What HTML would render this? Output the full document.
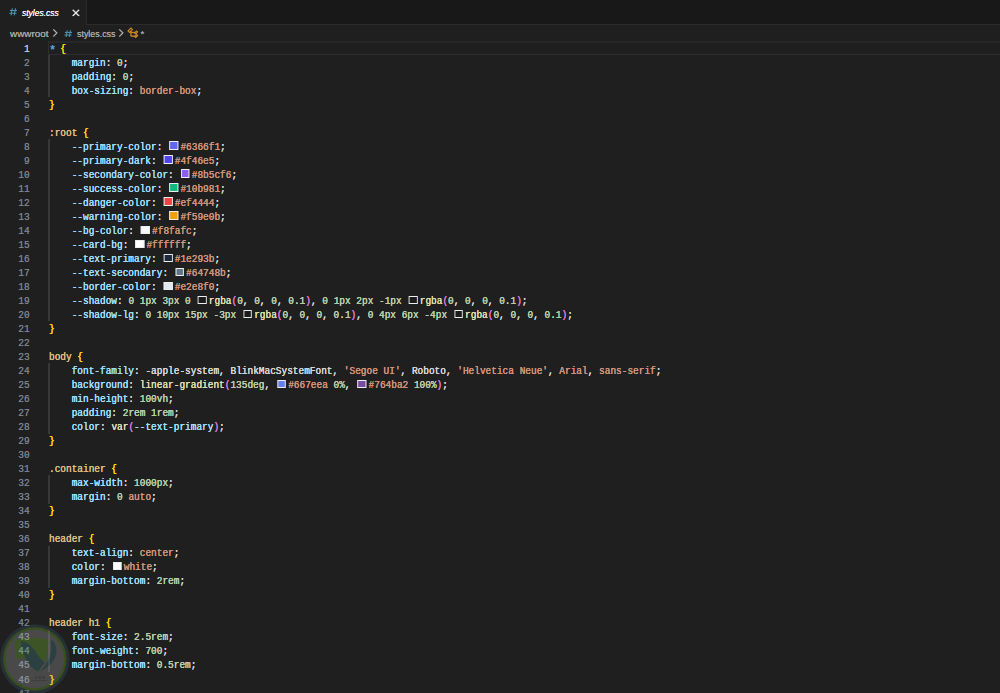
<!DOCTYPE html>
<html lang="en">
<head>
<meta charset="utf-8">
<title>styles.css</title>
<style>
html,body{margin:0;padding:0;}
body{width:1000px;height:693px;overflow:hidden;background:#1f1f1f;position:relative;font-family:"Liberation Sans",sans-serif;}
#tabs{position:absolute;left:0;top:0;width:1000px;height:25px;background:#181818;border-bottom:1px solid #2b2b2b;box-sizing:border-box;}
#tab{position:absolute;left:0;top:0;width:87px;height:25px;background:#1f1f1f;border-right:1px solid #2b2b2b;box-sizing:border-box;}
.hash{position:absolute;}
#tab .name{position:absolute;left:21.8px;top:7.3px;font-size:9.6px;line-height:normal;color:#ffffff;font-style:italic;white-space:nowrap;transform:scaleX(0.885);transform-origin:0 0;text-shadow:0 0 0.5px currentColor;}
#tab .x{position:absolute;left:70.1px;top:6.8px;width:11.8px;height:11.8px;}
#crumbs{position:absolute;left:0;top:25px;width:1000px;height:16px;background:#1f1f1f;font-size:9.6px;color:#a9a9a9;white-space:nowrap;}
#crumbs .bt{position:absolute;top:3.2px;line-height:normal;transform-origin:0 0;text-shadow:0 0 0.5px currentColor;}
#crumbs .ic{position:absolute;top:2.3px;width:11.8px;height:11.8px;}
#editor{position:absolute;left:0;top:41px;width:1000px;height:652px;overflow:hidden;font-family:"Liberation Mono",monospace;font-size:10.3px;line-height:14px;color:#d4d4d4;}
.l{position:relative;height:14.016px;white-space:pre;}
.ln{position:absolute;left:0;top:0.8px;width:29.6px;text-align:right;color:#7b828d;transform:scaleX(0.919);transform-origin:100% 0;text-shadow:0 0 0.6px currentColor;}
.cur .ln{color:#cccccc;}
.cur:after{content:"";position:absolute;left:48px;top:0;right:0;height:15px;background:linear-gradient(to bottom,rgba(48,48,48,.55) 50%,rgba(48,48,48,.45) 50%) 0 0/100% 2px no-repeat,linear-gradient(#2e2e2e,#2e2e2e) 0 13px/100% 1px no-repeat,linear-gradient(#2e2e2e,#2e2e2e) 0 1px/1px 13px no-repeat;}
.c{position:absolute;left:49.2px;top:0.8px;transform:scaleX(0.9174);transform-origin:0 0;text-shadow:0 0 0.6px currentColor,0 0 0.5px currentColor;}
.g{position:absolute;left:48.2px;top:0;width:1.4px;height:14.1px;background:#383838;}
.w{display:inline-block;box-sizing:border-box;width:9.7px;height:8.6px;border:solid #eeeeee;border-width:1px 1.09px;margin:0 2.24px 0 1.54px;vertical-align:-0.1px;}
.k{color:#569cd6}.s{color:#d7ba7d}.p{color:#9cdcfe}.v{color:#ce9178}.n{color:#b5cea8}.f{color:#dcdcaa}.b1{color:#ffd700}.b2{color:#da70d6}.t{color:#d4d4d4}
#wm{position:absolute;left:0;top:623.5px;opacity:0.31;}
.ast{display:inline-block;width:6.18px;text-align:center;font-size:13px;line-height:0;position:relative;top:2.6px;}
</style>
</head>
<body>
<div id="tabs">
  <div id="tab">
    <svg class="hash" style="left:9.2px;top:7.9px" width="8.4" height="7.7" preserveAspectRatio="none" viewBox="0 0 8.4 8"><path d="M3.3 0.3 L2.1 7.7 M6.5 0.3 L5.3 7.7 M0.9 2.6 H8 M0.4 5.4 H7.5" stroke="#519aba" stroke-width="1" fill="none"/></svg>
    <span class="name">styles.css</span>
    <svg class="x" viewBox="0 0 16 16"><path fill="#ffffff" stroke="#ffffff" stroke-width="0.9" d="M8 8.707l3.646 3.647.708-.707L8.707 8l3.647-3.646-.707-.708L8 7.293 4.354 3.646l-.707.708L7.293 8l-3.646 3.646.707.708L8 8.707z"/></svg>
  </div>
</div>
<div id="crumbs">
  <span class="bt" style="left:10px;transform:scaleX(1.03)">wwwroot</span>
  <svg class="ic" style="left:49px" viewBox="0 0 16 16"><path fill="#c4c4c4" stroke="#c4c4c4" stroke-width="0.8" d="M10.072 8.024L5.715 3.667l.618-.62L11 7.716v.618L6.333 13l-.618-.619 4.357-4.357z"/></svg>
  <svg class="hash" style="left:64.1px;top:5px" width="8.4" height="7.4" preserveAspectRatio="none" viewBox="0 0 8.4 8"><path d="M3.3 0.3 L2.1 7.7 M6.5 0.3 L5.3 7.7 M0.9 2.6 H8 M0.4 5.4 H7.5" stroke="#519aba" stroke-width="1" fill="none"/></svg>
  <span class="bt" style="left:76.6px;transform:scaleX(0.925)">styles.css</span>
  <svg class="ic" style="left:115.1px" viewBox="0 0 16 16"><path fill="#c4c4c4" stroke="#c4c4c4" stroke-width="0.8" d="M10.072 8.024L5.715 3.667l.618-.62L11 7.716v.618L6.333 13l-.618-.619 4.357-4.357z"/></svg>
  <svg class="ic" style="left:126.9px" viewBox="0 0 16 16"><path fill="#ee9d28" stroke="#ee9d28" stroke-width="0.45" d="M11.34 9.71h.71l2.67-2.67v-.71L13.38 5h-.7l-1.82 1.81h-5V5.56l1.86-1.85V3l-2-2H5L1 5v.71l2 2h.71l1.14-1.15v5.79l.5.5H10v.52l1.33 1.34h.71l2.67-2.67v-.71L13.37 10h-.7l-1.86 1.85h-5v-4H10v.48l1.34 1.38zm1.69-3.65l.63.63-2 2-.63-.63 2-2zm0 5l.63.63-2 2-.63-.63 2-2zM3.35 6.65l-1.29-1.3 3.29-3.29 1.3 1.29-3.3 3.3z"/></svg>
  <span class="bt" style="left:140.6px">*</span>
</div>
<div id="editor">
<div class="l cur"><span class="ln">1</span><span class="c"><span class="k ast">*</span> <span class="b1">{</span></span></div>
<div class="l"><span class="ln">2</span><i class="g"></i><span class="c">    <span class="p">margin</span><span class="t">:</span> <span class="n">0</span><span class="t">;</span></span></div>
<div class="l"><span class="ln">3</span><i class="g"></i><span class="c">    <span class="p">padding</span><span class="t">:</span> <span class="n">0</span><span class="t">;</span></span></div>
<div class="l"><span class="ln">4</span><i class="g"></i><span class="c">    <span class="p">box-sizing</span><span class="t">:</span> <span class="v">border-box</span><span class="t">;</span></span></div>
<div class="l"><span class="ln">5</span><span class="c"><span class="b1">}</span></span></div>
<div class="l"><span class="ln">6</span><span class="c"></span></div>
<div class="l"><span class="ln">7</span><span class="c"><span class="s">:root</span> <span class="b1">{</span></span></div>
<div class="l"><span class="ln">8</span><i class="g"></i><span class="c">    <span class="p">--primary-color</span><span class="t">:</span> <i class="w" style="background:#6366f1"></i><span class="v">#6366f1</span><span class="t">;</span></span></div>
<div class="l"><span class="ln">9</span><i class="g"></i><span class="c">    <span class="p">--primary-dark</span><span class="t">:</span> <i class="w" style="background:#4f46e5"></i><span class="v">#4f46e5</span><span class="t">;</span></span></div>
<div class="l"><span class="ln">10</span><i class="g"></i><span class="c">    <span class="p">--secondary-color</span><span class="t">:</span> <i class="w" style="background:#8b5cf6"></i><span class="v">#8b5cf6</span><span class="t">;</span></span></div>
<div class="l"><span class="ln">11</span><i class="g"></i><span class="c">    <span class="p">--success-color</span><span class="t">:</span> <i class="w" style="background:#10b981"></i><span class="v">#10b981</span><span class="t">;</span></span></div>
<div class="l"><span class="ln">12</span><i class="g"></i><span class="c">    <span class="p">--danger-color</span><span class="t">:</span> <i class="w" style="background:#ef4444"></i><span class="v">#ef4444</span><span class="t">;</span></span></div>
<div class="l"><span class="ln">13</span><i class="g"></i><span class="c">    <span class="p">--warning-color</span><span class="t">:</span> <i class="w" style="background:#f59e0b"></i><span class="v">#f59e0b</span><span class="t">;</span></span></div>
<div class="l"><span class="ln">14</span><i class="g"></i><span class="c">    <span class="p">--bg-color</span><span class="t">:</span> <i class="w" style="background:#f8fafc"></i><span class="v">#f8fafc</span><span class="t">;</span></span></div>
<div class="l"><span class="ln">15</span><i class="g"></i><span class="c">    <span class="p">--card-bg</span><span class="t">:</span> <i class="w" style="background:#ffffff"></i><span class="v">#ffffff</span><span class="t">;</span></span></div>
<div class="l"><span class="ln">16</span><i class="g"></i><span class="c">    <span class="p">--text-primary</span><span class="t">:</span> <i class="w" style="background:#1e293b"></i><span class="v">#1e293b</span><span class="t">;</span></span></div>
<div class="l"><span class="ln">17</span><i class="g"></i><span class="c">    <span class="p">--text-secondary</span><span class="t">:</span> <i class="w" style="background:#64748b"></i><span class="v">#64748b</span><span class="t">;</span></span></div>
<div class="l"><span class="ln">18</span><i class="g"></i><span class="c">    <span class="p">--border-color</span><span class="t">:</span> <i class="w" style="background:#e2e8f0"></i><span class="v">#e2e8f0</span><span class="t">;</span></span></div>
<div class="l"><span class="ln">19</span><i class="g"></i><span class="c">    <span class="p">--shadow</span><span class="t">:</span> <span class="n">0</span> <span class="n">1px</span> <span class="n">3px</span> <span class="n">0</span> <i class="w" style="background:rgba(0,0,0,0.1)"></i><span class="f">rgba</span><span class="b2">(</span><span class="n">0</span><span class="t">,</span> <span class="n">0</span><span class="t">,</span> <span class="n">0</span><span class="t">,</span> <span class="n">0.1</span><span class="b2">)</span><span class="t">,</span> <span class="n">0</span> <span class="n">1px</span> <span class="n">2px</span> <span class="n">-1px</span> <i class="w" style="background:rgba(0,0,0,0.1)"></i><span class="f">rgba</span><span class="b2">(</span><span class="n">0</span><span class="t">,</span> <span class="n">0</span><span class="t">,</span> <span class="n">0</span><span class="t">,</span> <span class="n">0.1</span><span class="b2">)</span><span class="t">;</span></span></div>
<div class="l"><span class="ln">20</span><i class="g"></i><span class="c">    <span class="p">--shadow-lg</span><span class="t">:</span> <span class="n">0</span> <span class="n">10px</span> <span class="n">15px</span> <span class="n">-3px</span> <i class="w" style="background:rgba(0,0,0,0.1)"></i><span class="f">rgba</span><span class="b2">(</span><span class="n">0</span><span class="t">,</span> <span class="n">0</span><span class="t">,</span> <span class="n">0</span><span class="t">,</span> <span class="n">0.1</span><span class="b2">)</span><span class="t">,</span> <span class="n">0</span> <span class="n">4px</span> <span class="n">6px</span> <span class="n">-4px</span> <i class="w" style="background:rgba(0,0,0,0.1)"></i><span class="f">rgba</span><span class="b2">(</span><span class="n">0</span><span class="t">,</span> <span class="n">0</span><span class="t">,</span> <span class="n">0</span><span class="t">,</span> <span class="n">0.1</span><span class="b2">)</span><span class="t">;</span></span></div>
<div class="l"><span class="ln">21</span><span class="c"><span class="b1">}</span></span></div>
<div class="l"><span class="ln">22</span><span class="c"></span></div>
<div class="l"><span class="ln">23</span><span class="c"><span class="s">body</span> <span class="b1">{</span></span></div>
<div class="l"><span class="ln">24</span><i class="g"></i><span class="c">    <span class="p">font-family</span><span class="t">:</span> <span class="t">-apple-system</span><span class="t">,</span> <span class="t">BlinkMacSystemFont</span><span class="t">,</span> <span class="v">'Segoe UI'</span><span class="t">,</span> <span class="t">Roboto</span><span class="t">,</span> <span class="v">'Helvetica Neue'</span><span class="t">,</span> <span class="v">Arial</span><span class="t">,</span> <span class="v">sans-serif</span><span class="t">;</span></span></div>
<div class="l"><span class="ln">25</span><i class="g"></i><span class="c">    <span class="p">background</span><span class="t">:</span> <span class="f">linear-gradient</span><span class="b2">(</span><span class="n">135deg</span><span class="t">,</span> <i class="w" style="background:#667eea"></i><span class="v">#667eea</span> <span class="n">0%</span><span class="t">,</span> <i class="w" style="background:#764ba2"></i><span class="v">#764ba2</span> <span class="n">100%</span><span class="b2">)</span><span class="t">;</span></span></div>
<div class="l"><span class="ln">26</span><i class="g"></i><span class="c">    <span class="p">min-height</span><span class="t">:</span> <span class="n">100vh</span><span class="t">;</span></span></div>
<div class="l"><span class="ln">27</span><i class="g"></i><span class="c">    <span class="p">padding</span><span class="t">:</span> <span class="n">2rem</span> <span class="n">1rem</span><span class="t">;</span></span></div>
<div class="l"><span class="ln">28</span><i class="g"></i><span class="c">    <span class="p">color</span><span class="t">:</span> <span class="f">var</span><span class="b2">(</span><span class="p">--text-primary</span><span class="b2">)</span><span class="t">;</span></span></div>
<div class="l"><span class="ln">29</span><span class="c"><span class="b1">}</span></span></div>
<div class="l"><span class="ln">30</span><span class="c"></span></div>
<div class="l"><span class="ln">31</span><span class="c"><span class="s">.container</span> <span class="b1">{</span></span></div>
<div class="l"><span class="ln">32</span><i class="g"></i><span class="c">    <span class="p">max-width</span><span class="t">:</span> <span class="n">1000px</span><span class="t">;</span></span></div>
<div class="l"><span class="ln">33</span><i class="g"></i><span class="c">    <span class="p">margin</span><span class="t">:</span> <span class="n">0</span> <span class="v">auto</span><span class="t">;</span></span></div>
<div class="l"><span class="ln">34</span><span class="c"><span class="b1">}</span></span></div>
<div class="l"><span class="ln">35</span><span class="c"></span></div>
<div class="l"><span class="ln">36</span><span class="c"><span class="s">header</span> <span class="b1">{</span></span></div>
<div class="l"><span class="ln">37</span><i class="g"></i><span class="c">    <span class="p">text-align</span><span class="t">:</span> <span class="v">center</span><span class="t">;</span></span></div>
<div class="l"><span class="ln">38</span><i class="g"></i><span class="c">    <span class="p">color</span><span class="t">:</span> <i class="w" style="background:#fff"></i><span class="v">white</span><span class="t">;</span></span></div>
<div class="l"><span class="ln">39</span><i class="g"></i><span class="c">    <span class="p">margin-bottom</span><span class="t">:</span> <span class="n">2rem</span><span class="t">;</span></span></div>
<div class="l"><span class="ln">40</span><span class="c"><span class="b1">}</span></span></div>
<div class="l"><span class="ln">41</span><span class="c"></span></div>
<div class="l"><span class="ln">42</span><span class="c"><span class="s">header h1</span> <span class="b1">{</span></span></div>
<div class="l"><span class="ln">43</span><i class="g"></i><span class="c">    <span class="p">font-size</span><span class="t">:</span> <span class="n">2.5rem</span><span class="t">;</span></span></div>
<div class="l"><span class="ln">44</span><i class="g"></i><span class="c">    <span class="p">font-weight</span><span class="t">:</span> <span class="n">700</span><span class="t">;</span></span></div>
<div class="l"><span class="ln">45</span><i class="g"></i><span class="c">    <span class="p">margin-bottom</span><span class="t">:</span> <span class="n">0.5rem</span><span class="t">;</span></span></div>
<div class="l"><span class="ln">46</span><span class="c"><span class="b1">}</span></span></div>
<div class="l"><span class="ln">47</span><span class="c"></span></div>
</div>
<svg id="wm" width="70" height="70" viewBox="0 0 70 70">
  <circle cx="34.8" cy="35" r="34.8" fill="#37566c"/>
  <circle cx="34.8" cy="35" r="31.7" fill="#74b822"/>
  <circle cx="34.8" cy="35" r="29.3" fill="#a8a8a8"/>
  <path d="M15 16 C25 13 40 13 48.4 16 C48.6 26 47 34 44.5 38.5 L38 47.2 C33 45.5 28 40 25 33.2 C22 35.5 17.5 36 16.2 32.5 C15.3 28 15 22 15 16 Z" fill="#80cc38"/>
  <path d="M21.2 16.6 C27 18 33 23 36 28.5 C38.5 33 42 36 44.5 38.5 L38 47.4 C33 45.5 28 40 25 33.2 C23 28.5 21.3 26 21.2 23.5 Z" fill="#478989"/>
  <path d="M52.2 15.8 C60.5 26 57 39.5 40 47.6 C49.5 38.5 53 27.5 50.6 17.6 Z" fill="#478989"/>
  <text x="35" y="55.4" font-family="Liberation Serif, serif" font-size="5.5" fill="#303838" letter-spacing="1.6">ios</text>
  <path d="M31.5 56.6 H47" stroke="#60686a" stroke-width="0.6"/>
</svg>
</body>
</html>
